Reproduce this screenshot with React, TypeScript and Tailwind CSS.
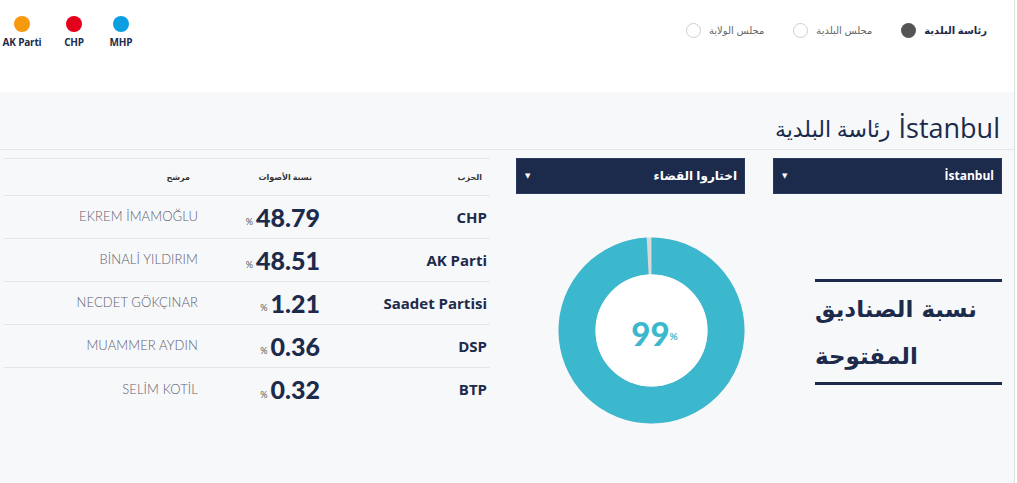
const legend = [
  { name: "AK Parti", color: "bg-[#f7990d]", cls: "w-[38px]" },
  { name: "CHP", color: "bg-[#e2001a]", cls: "w-[26px] ml-[20px]" },
  { name: "MHP", color: "bg-[#0b9ee0]", cls: "w-[26px] ml-[21px]" },
];

const radios = [
  { label: "رئاسة البلدية", active: true },
  { label: "مجلس البلدية", active: false },
  { label: "مجلس الولاية", active: false },
];

const rows = [
  { name: "EKREM İMAMOĞLU", pct: "48.79", party: "CHP" },
  { name: "BİNALİ YILDIRIM", pct: "48.51", party: "AK Parti" },
  { name: "NECDET GÖKÇINAR", pct: "1.21", party: "Saadet Partisi" },
  { name: "MUAMMER AYDIN", pct: "0.36", party: "DSP" },
  { name: "SELİM KOTİL", pct: "0.32", party: "BTP" },
];

function Donut({ value }: { value: number }) {
  const r = 74.5;
  const c = 2 * Math.PI * r;
  return (
    <div className="relative w-[187px] h-[187px]">
      <svg width="187" height="187" viewBox="0 0 187 187">
        <circle cx="93.5" cy="93.5" r={r} fill="none" stroke="#d9d9d9" strokeWidth="37" />
        <circle
          cx="93.5"
          cy="93.5"
          r={r}
          fill="none"
          stroke="#3bb8ce"
          strokeWidth="37"
          strokeDasharray={`${(c * value) / 100} ${c}`}
          transform="rotate(-90 93.5 93.5)"
        />
        <circle cx="93.5" cy="93.5" r="56" fill="#ffffff" />
      </svg>
      <div className="absolute inset-0 flex items-center justify-center pt-[6px] pl-[6px]">
        <span className="font-['Lato'] font-black text-[33px] leading-none text-[#3bb8ce]">99</span>
        <span className="font-['Lato'] font-bold text-[10px] text-[#3bb8ce] mt-[6px]">%</span>
      </div>
    </div>
  );
}

function Select({ label }: { label: string }) {
  return (
    <div className="h-[36px] bg-[#1c2a4b] flex items-center justify-between pl-[8px] pr-[7px] border border-[#2a3a5e]">
      <span className="text-white text-[7px]">▼</span>
      <span dir="rtl" className="text-white text-[12px] font-bold">{label}</span>
    </div>
  );
}

export default function App() {
  return (
    <div className="w-[1017px] h-[483px] bg-white overflow-hidden font-['Open_Sans','DejaVu_Sans',sans-serif]">
      <div className="w-[1015px] h-full border-r border-[#dedede] bg-[#f7f8fa] flex flex-col">
        {/* top bar */}
        <div className="h-[92px] bg-white flex justify-between items-start">
          <div className="flex pl-[3px] pt-[16px]">
            {legend.map((l) => (
              <div key={l.name} className={`flex flex-col items-center ${l.cls}`}>
                <span className={`w-[16px] h-[16px] rounded-full ${l.color}`} />
                <span className="mt-[5px] text-[10px] font-bold text-[#1c2a4b] leading-none whitespace-nowrap tracking-[-0.2px]">
                  {l.name}
                </span>
              </div>
            ))}
          </div>
          <div dir="rtl" className="flex items-center gap-[29px] pt-[23px] pr-[27px]">
            {radios.map((r) => (
              <div key={r.label} className="flex items-center gap-[8px]">
                <span
                  className={`text-[10px] ${r.active ? "font-bold text-[#1c2a4b]" : "text-[#666666]"}`}
                >
                  {r.label}
                </span>
                <span
                  className={`w-[15px] h-[15px] rounded-full ${
                    r.active ? "bg-[#555555]" : "bg-white border border-[#cfcfcf]"
                  }`}
                />
              </div>
            ))}
          </div>
        </div>

        {/* title */}
        <div className="h-[58px] border-b border-[#e3e5e8] flex items-center justify-end pr-[14px] pt-[14px]">
          <span className="text-[22px] text-[#1c2a4b] mr-[8px] leading-none">رئاسة البلدية</span>
          <span className="text-[27px] text-[#1c2a4b] leading-none">İstanbul</span>
        </div>

        {/* main */}
        <div className="flex pt-[8px]">
          {/* table */}
          <div className="w-[486px] ml-[4px] border-t border-[#e3e5e8]">
            <div className="h-[37px] flex items-center border-b border-[#e3e5e8] text-[8px] font-bold text-[#333333]">
              <div className="w-[194px] text-right pr-[8px]" dir="rtl">مرشح</div>
              <div className="w-[122px] text-right pr-[8px]" dir="rtl">نسبة الأصوات</div>
              <div className="flex-1 text-right pr-[8px]" dir="rtl">الحزب</div>
            </div>
            {rows.map((row, i) => (
              <div
                key={row.party}
                className={`h-[43px] flex items-center ${i < rows.length - 1 ? "border-b border-[#e3e5e8]" : ""}`}
              >
                <div className="w-[194px] text-right font-['Lato'] font-light text-[13px] text-[#5d6170] tracking-[0.1px]">
                  {row.name}
                </div>
                <div className="w-[122px] flex items-end justify-end">
                  <span className="font-['Lato'] text-[9px] text-[#555555] mr-[3px] mb-[1px]">%</span>
                  <span className="font-['Lato'] font-black text-[25px] leading-none text-[#1c2a4b]">
                    {row.pct}
                  </span>
                </div>
                <div className="flex-1 text-right pr-[3px] text-[15px] font-bold text-[#1c2a4b]">
                  {row.party}
                </div>
              </div>
            ))}
          </div>

          {/* district column */}
          <div className="w-[229px] ml-[26px] flex flex-col">
            <Select label="اختاروا القضاء" />
            <div className="flex justify-end mt-[43px]">
              <Donut value={99} />
            </div>
          </div>

          {/* city column */}
          <div className="w-[229px] ml-[28px] flex flex-col">
            <Select label="İstanbul" />
            <div className="mt-[85px] ml-[42px] border-t-[3px] border-b-[3px] border-[#1c2a4b] pt-[4px] pb-[2px]">
              <p dir="rtl" className="text-left text-[23px] font-bold leading-[47px] text-[#1c2a4b] whitespace-nowrap font-['DejaVu_Sans',sans-serif]">
                نسبة الصناديق
                <br />
                المفتوحة
              </p>
            </div>
          </div>
        </div>
      </div>
    </div>
  );
}
